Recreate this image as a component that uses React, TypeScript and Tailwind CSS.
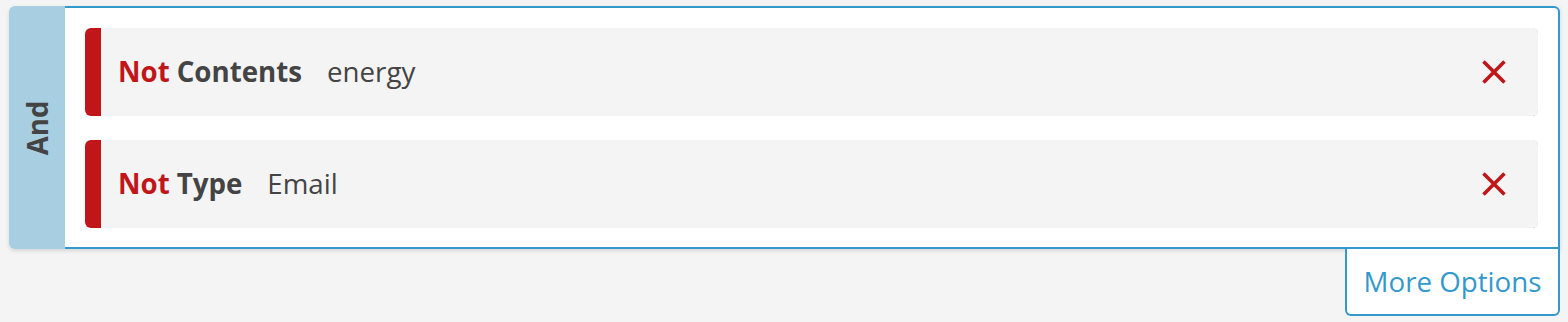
import React from "react";

function XIcon() {
  return (
    <svg width="26" height="26" viewBox="0 0 26 26" className="block">
      <path d="M2.5 2.5 L23.5 23.5 M23.5 2.5 L2.5 23.5" stroke="#c0161a" strokeWidth="3.6" strokeLinecap="butt" fill="none" />
    </svg>
  );
}

function Row({ field, value }: { field: string; value: string }) {
  return (
    <div className="flex h-[88px] rounded-[6px] bg-[#c0161a] pl-[16px]">
      <div className="flex flex-1 items-center rounded-r-[5px] bg-[#f4f4f4] pl-[17px] pr-[31px]">
        <span className="font-bold text-[#c0161a]">Not</span>
        <span className="ml-[7px] font-bold text-[#444444]">{field}</span>
        <span className="ml-[25px] text-[#444444]">{value}</span>
        <span className="ml-auto">
          <XIcon />
        </span>
      </div>
    </div>
  );
}

export default function App() {
  return (
    <div
      className="h-[322px] w-full bg-[#f4f4f4] pl-[9px] pr-[8px] pt-[6px] text-[27.7px] leading-none"
      style={{ fontFamily: '"Open Sans", "Noto Sans", sans-serif' }}
    >
      <div className="flex h-[243px] rounded-l-[6px] shadow-[0_2px_4px_rgba(0,0,0,0.12)]">
        <div className="flex w-[56px] items-center justify-center rounded-l-[6px] bg-[#a8cee1]">
          <span className="-rotate-90 font-bold text-[#444444]">And</span>
        </div>
        <div className="flex flex-1 flex-col gap-[24px] rounded-tr-[6px] border-2 border-l-0 border-[#3399cc] bg-white px-[20px] pb-[19px] pt-[20px]">
          <Row field="Contents" value="energy" />
          <Row field="Type" value="Email" />
        </div>
      </div>
      <div className="flex justify-end">
        <div className="flex h-[67px] w-[215px] items-center justify-center rounded-b-[6px] border-2 border-t-0 border-[#3399cc] bg-white text-[#3399cc]">
          More Options
        </div>
      </div>
    </div>
  );
}
